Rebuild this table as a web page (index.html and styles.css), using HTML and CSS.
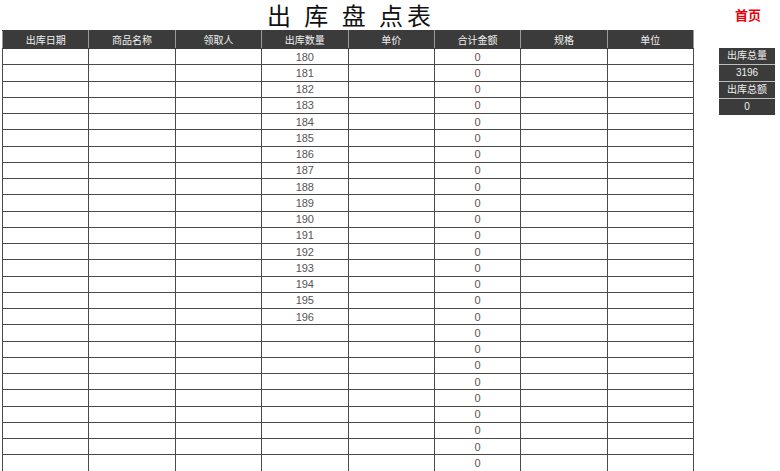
FILE: index.html
```html
<!DOCTYPE html>
<html lang="zh">
<head>
<meta charset="utf-8">
<title>出库盘点表</title>
<link rel="stylesheet" href="styles.css">
</head>
<body>
<div class="page">
  <div class="main">
    <h1 class="title">出 库 盘 点表</h1>
    <table class="sheet">
      <thead>
        <tr><th>出库日期</th><th>商品名称</th><th>领取人</th><th>出库数量</th><th>单价</th><th>合计金额</th><th>规格</th><th>单位</th></tr>
      </thead>
      <tbody>
        <tr><td></td><td></td><td></td><td>180</td><td></td><td>0</td><td></td><td></td></tr>
        <tr><td></td><td></td><td></td><td>181</td><td></td><td>0</td><td></td><td></td></tr>
        <tr><td></td><td></td><td></td><td>182</td><td></td><td>0</td><td></td><td></td></tr>
        <tr><td></td><td></td><td></td><td>183</td><td></td><td>0</td><td></td><td></td></tr>
        <tr><td></td><td></td><td></td><td>184</td><td></td><td>0</td><td></td><td></td></tr>
        <tr><td></td><td></td><td></td><td>185</td><td></td><td>0</td><td></td><td></td></tr>
        <tr><td></td><td></td><td></td><td>186</td><td></td><td>0</td><td></td><td></td></tr>
        <tr><td></td><td></td><td></td><td>187</td><td></td><td>0</td><td></td><td></td></tr>
        <tr><td></td><td></td><td></td><td>188</td><td></td><td>0</td><td></td><td></td></tr>
        <tr><td></td><td></td><td></td><td>189</td><td></td><td>0</td><td></td><td></td></tr>
        <tr><td></td><td></td><td></td><td>190</td><td></td><td>0</td><td></td><td></td></tr>
        <tr><td></td><td></td><td></td><td>191</td><td></td><td>0</td><td></td><td></td></tr>
        <tr><td></td><td></td><td></td><td>192</td><td></td><td>0</td><td></td><td></td></tr>
        <tr><td></td><td></td><td></td><td>193</td><td></td><td>0</td><td></td><td></td></tr>
        <tr><td></td><td></td><td></td><td>194</td><td></td><td>0</td><td></td><td></td></tr>
        <tr><td></td><td></td><td></td><td>195</td><td></td><td>0</td><td></td><td></td></tr>
        <tr><td></td><td></td><td></td><td>196</td><td></td><td>0</td><td></td><td></td></tr>
        <tr><td></td><td></td><td></td><td></td><td></td><td>0</td><td></td><td></td></tr>
        <tr><td></td><td></td><td></td><td></td><td></td><td>0</td><td></td><td></td></tr>
        <tr><td></td><td></td><td></td><td></td><td></td><td>0</td><td></td><td></td></tr>
        <tr><td></td><td></td><td></td><td></td><td></td><td>0</td><td></td><td></td></tr>
        <tr><td></td><td></td><td></td><td></td><td></td><td>0</td><td></td><td></td></tr>
        <tr><td></td><td></td><td></td><td></td><td></td><td>0</td><td></td><td></td></tr>
        <tr><td></td><td></td><td></td><td></td><td></td><td>0</td><td></td><td></td></tr>
        <tr><td></td><td></td><td></td><td></td><td></td><td>0</td><td></td><td></td></tr>
        <tr><td></td><td></td><td></td><td></td><td></td><td>0</td><td></td><td></td></tr>
        <tr><td></td><td></td><td></td><td></td><td></td><td>0</td><td></td><td></td></tr>
      </tbody>
    </table>
  </div>
  <div class="side">
    <div class="home-wrap"><a class="home" href="#">首页</a></div>
    <div class="summary">
      <div class="sum-cell">出库总量</div>
      <div class="sum-cell">3196</div>
      <div class="sum-cell">出库总额</div>
      <div class="sum-cell">0</div>
    </div>
  </div>
</div>
</body>
</html>
```

FILE: styles.css
```css
html, body {
  margin: 0;
  padding: 0;
  background: #fff;
  overflow: hidden;
}
body {
  font-family: "Liberation Sans", "Noto Sans CJK SC", sans-serif;
}
.page {
  display: flex;
  align-items: flex-start;
  height: 471px;
  overflow: hidden;
}
.main {
  margin-left: 2px;
  width: 692px;
}
.title {
  margin: 0;
  height: 30px;
  line-height: 30px;
  text-align: center;
  font-family: "Noto Sans CJK SC", sans-serif;
  font-weight: 400;
  font-size: 24px;
  letter-spacing: 4px;
  color: #111;
  padding-left: 6px;
  white-space: pre;
}
.sheet {
  border-collapse: collapse;
  table-layout: fixed;
  width: 692px;
}
.sheet th {
  background: #3b3b3b;
  color: #f2f2f2;
  font-family: "Noto Sans CJK SC", sans-serif;
  font-weight: 400;
  font-size: 10px;
  height: 17px;
  padding: 0;
  border: 1px solid #3b3b3b;
  border-left-color: #9a9a9a;
  border-right-color: #9a9a9a;
  line-height: 16px;
}
.sheet td {
  border: 1px solid #4a4a4a;
  height: 15.25px;
  padding: 0;
  text-align: center;
  font-size: 11px;
  line-height: 14px;
  color: #555;
}
.side {
  margin-left: 25px;
  width: 56px;
  display: flex;
  flex-direction: column;
}
.home-wrap {
  height: 48px;
  display: flex;
  justify-content: center;
  padding-top: 5px;
  box-sizing: border-box;
}
.home {
  font-family: "Noto Sans CJK SC", sans-serif;
  font-weight: 700;
  font-size: 13px;
  line-height: 19px;
  color: #e8000b;
  text-decoration: none;
  margin-left: 2px;
}
.summary {
  background: #3b3b3b;
  display: flex;
  flex-direction: column;
}
.sum-cell {
  height: 16px;
  line-height: 16px;
  text-align: center;
  color: #f0f0f0;
  font-size: 10px;
  font-family: "Liberation Sans", "Noto Sans CJK SC", sans-serif;
  border-bottom: 1px solid #bdbdbd;
}
.sum-cell:last-child {
  border-bottom: 0;
}
```
